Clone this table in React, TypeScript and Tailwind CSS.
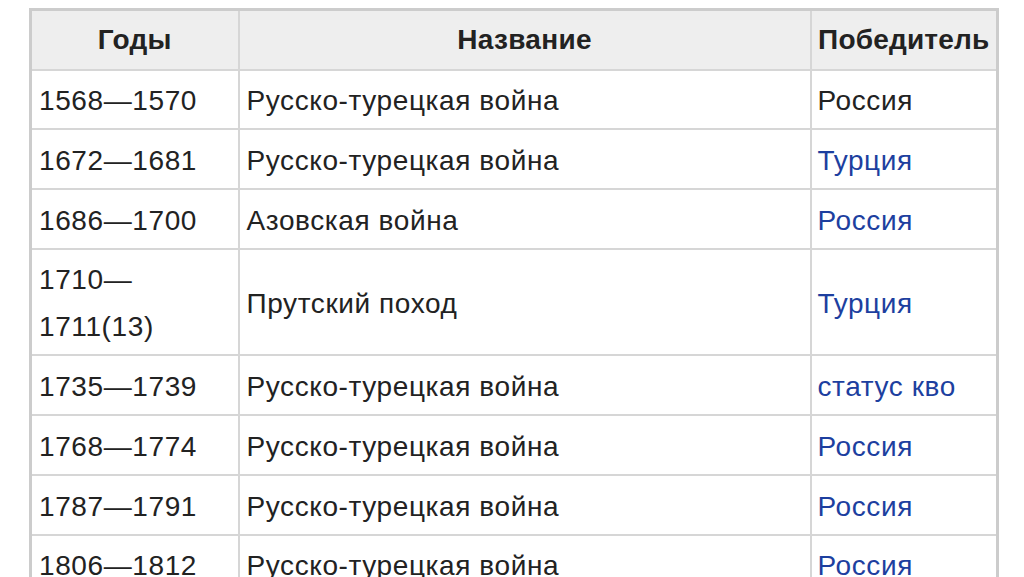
import React from 'react';

const rows = [
  { years: ['1568—1570'], name: 'Русско-турецкая война', winner: 'Россия', link: false },
  { years: ['1672—1681'], name: 'Русско-турецкая война', winner: 'Турция', link: true },
  { years: ['1686—1700'], name: 'Азовская война', winner: 'Россия', link: true },
  { years: ['1710—', '1711(13)'], name: 'Прутский поход', winner: 'Турция', link: true },
  { years: ['1735—1739'], name: 'Русско-турецкая война', winner: 'статус кво', link: true },
  { years: ['1768—1774'], name: 'Русско-турецкая война', winner: 'Россия', link: true },
  { years: ['1787—1791'], name: 'Русско-турецкая война', winner: 'Россия', link: true },
  { years: ['1806—1812'], name: 'Русско-турецкая война', winner: 'Россия', link: true },
];

const App = () => {
  return (
    <div
      className="w-[1024px] h-[577px] overflow-hidden bg-white pt-[8px] pl-[29px] text-[#222222]"
      style={{ fontFamily: '"Liberation Sans", Arial, sans-serif' }}
    >
      <table className="border-collapse border-[3px] border-[#cccccc] text-[28px] leading-[46.8px] tracking-[0.6px]">
        <colgroup>
          <col className="w-[208px]" />
          <col className="w-[572px]" />
          <col className="w-[187px]" />
        </colgroup>
        <thead>
          <tr className="bg-[#eeeeee]">
            <th className="border-2 border-[#d6d6d6] h-[60px] pt-[2px] pb-0 px-0 text-center font-bold tracking-[0.3px]">Годы</th>
            <th className="border-2 border-[#d6d6d6] h-[60px] pt-[2px] pb-0 px-0 text-center font-bold tracking-[0.3px]">Название</th>
            <th className="border-2 border-[#d6d6d6] h-[60px] pt-[2px] pb-0 px-0 text-center font-bold tracking-[0.2px] whitespace-nowrap">
              Победитель
            </th>
          </tr>
        </thead>
        <tbody>
          {rows.map((row, i) => (
            <tr key={i}>
              <td className="border-2 border-[#d6d6d6] px-[7px] pt-[7.5px] pb-[3.5px] align-middle">
                {row.years.map((y, j) => (
                  <div key={j}>{y}</div>
                ))}
              </td>
              <td className="border-2 border-[#d6d6d6] px-[7px] pt-[7.5px] pb-[3.5px] align-middle">{row.name}</td>
              <td
                className={
                  'border-2 border-[#d6d6d6] px-[6px] pt-[7.5px] pb-[3.5px] align-middle whitespace-nowrap ' +
                  (row.link ? 'text-[#1d3f9f]' : '')
                }
              >
                {row.winner}
              </td>
            </tr>
          ))}
        </tbody>
      </table>
    </div>
  );
};

export default App;
